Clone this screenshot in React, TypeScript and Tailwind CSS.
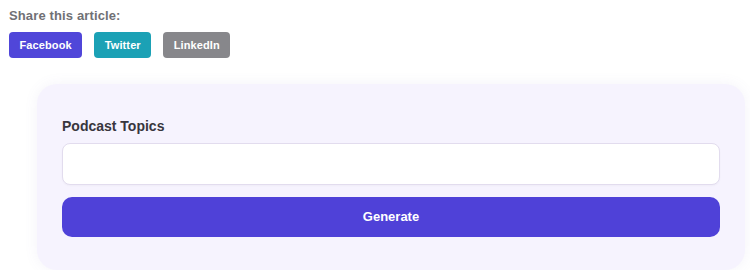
import React, { useState } from 'react';

const shareLinks = [
  { label: 'Facebook', className: 'bg-[#5046d9]' },
  { label: 'Twitter', className: 'bg-[#1ba1b5]' },
  { label: 'LinkedIn', className: 'bg-[#87878b]' },
];

export default function App() {
  const [topics, setTopics] = useState('');

  return (
    <div className="bg-white pt-[7px] font-['Liberation_Sans',Arial,sans-serif]">
      {/* Share row */}
      <div className="px-[9px]">
        <p className="text-[13px] leading-[18px] font-bold tracking-[0.01em] text-[#707075]">Share this article:</p>
        <div className="mt-[7px] flex gap-3">
          {shareLinks.map(link => (
            <button
              key={link.label}
              className={`${link.className} h-[26px] rounded-[4px] px-[10.5px] text-[11px] font-bold tracking-[0.01em] text-white`}
            >
              {link.label}
            </button>
          ))}
        </div>
      </div>

      {/* Generator card */}
      <div className="ml-[37px] mr-[5px] mt-[26px] rounded-[20px] bg-[#f6f3fe] px-[25px] pt-8 pb-[33px] shadow-[0_0_14px_rgba(120,100,180,0.08)]">
        <label className="block text-[14px] leading-5 font-bold text-[#38363d]">Podcast Topics</label>
        <input
          value={topics}
          onChange={e => setTopics(e.target.value)}
          className="mt-[7px] block h-[42px] w-full rounded-[8px] border border-[#e2dcee] bg-white px-3 text-[14px] outline-none shadow-[0_1px_2px_rgba(0,0,0,0.03)]"
        />
        <button className="mt-3 h-10 w-full rounded-[10px] bg-[#4f41d8] text-[13px] font-bold text-white">
          Generate
        </button>
      </div>
    </div>
  );
}
